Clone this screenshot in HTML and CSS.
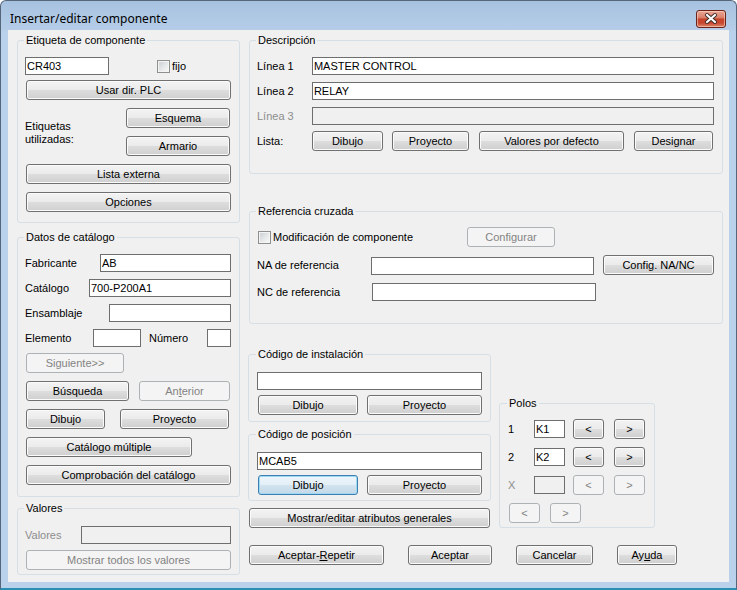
FILE: index.html
```html
<!DOCTYPE html>
<html>
<head>
<meta charset="utf-8">
<title>Insertar/editar componente</title>
<link rel="stylesheet" href="styles.css">
</head>
<body>
<div class="window">
  <div class="titlebar">
    <span class="title">Insertar/editar componente</span>
    <div class="close">
      <svg width="30" height="18" viewBox="0 0 30 18">
        <path d="M11 5 L19 12 M19 5 L11 12" stroke="#3a2a2a" stroke-width="4" stroke-linecap="round"/>
        <path d="M11 5 L19 12 M19 5 L11 12" stroke="#ffffff" stroke-width="2.2" stroke-linecap="round"/>
      </svg>
    </div>
  </div>
  <div class="client">
    <div class="col-left">
      <fieldset class="group g-tag">
        <legend>Etiqueta de componente</legend>
        <div class="row">
          <div class="tb w84">CR403</div>
          <div class="chk chk-fijo"><span class="cb"></span><span>fijo</span></div>
        </div>
        <button class="btn b-wide mt5">Usar dir. PLC</button>
        <div class="row used">
          <div class="used-label">Etiquetas<br>utilizadas:</div>
          <div class="used-btns">
            <button class="btn w104">Esquema</button>
            <button class="btn w104 mt8">Armario</button>
          </div>
        </div>
        <button class="btn b-wide mt8">Lista externa</button>
        <button class="btn b-wide mt8">Opciones</button>
      </fieldset>

      <fieldset class="group g-cat">
        <legend>Datos de catálogo</legend>
        <div class="row"><span>Fabricante</span><div class="tb w131 ml-auto">AB</div></div>
        <div class="row mt7"><span>Catálogo</span><div class="tb w142 ml-auto">700-P200A1</div></div>
        <div class="row mt7"><span>Ensamblaje</span><div class="tb w122 ml-auto"></div></div>
        <div class="row mt7"><span class="lbl-el">Elemento</span><div class="tb w48"></div><span class="ml8">Número</span><div class="tb w24 ml-auto"></div></div>
        <button class="btn dis w98 ml1 mt6">Siguiente&gt;&gt;</button>
        <div class="row mt8"><button class="btn w103 ml1">Búsqueda</button><button class="btn dis w91 ml-auto mr1">An<u>t</u>erior</button></div>
        <div class="row mt8"><button class="btn w79 ml1">Dibujo</button><button class="btn w109 ml-auto mr2">Proyecto</button></div>
        <button class="btn w166 ml1 mt8">Catálogo múltiple</button>
        <button class="btn b-wide mt8">Comprobación del catálogo</button>
      </fieldset>

      <fieldset class="group g-val">
        <legend>Valores</legend>
        <div class="row"><span class="gray">Valores</span><div class="tb dis w150 ml-auto"></div></div>
        <button class="btn dis b-wide mt6">Mostrar todos los valores</button>
      </fieldset>
    </div>

    <div class="col-right">
      <fieldset class="group g-desc">
        <legend>Descripción</legend>
        <div class="row"><span class="lbl55">Línea 1</span><div class="tb w403">MASTER CONTROL</div></div>
        <div class="row mt7"><span class="lbl55">Línea 2</span><div class="tb w403">RELAY</div></div>
        <div class="row mt7"><span class="lbl55 gray">Línea 3</span><div class="tb dis w403"></div></div>
        <div class="row mt6">
          <span class="lbl55">Lista:</span>
          <button class="btn w71">Dibujo</button>
          <button class="btn w77 ml9">Proyecto</button>
          <button class="btn w145 ml10">Valores por defecto</button>
          <button class="btn w79 ml10">Designar</button>
        </div>
      </fieldset>

      <fieldset class="group g-ref">
        <legend>Referencia cruzada</legend>
        <div class="row">
          <div class="chk chk-mod"><span class="cb"></span><span>Modificación de componente</span></div>
          <button class="btn dis w88">Configurar</button>
        </div>
        <div class="row mt8 top">
          <span class="lbl114 lbl-off">NA de referencia</span>
          <div class="tb w223 tb-off"></div>
          <button class="btn w111 ml-auto">Config. NA/NC</button>
        </div>
        <div class="row mt8">
          <span class="lbl115">NC de referencia</span>
          <div class="tb w224"></div>
        </div>
      </fieldset>

      <div class="lower">
        <div class="subcol">
          <fieldset class="group g-inst">
            <legend>Código de instalación</legend>
            <div class="tb w225"></div>
            <div class="row mt5"><button class="btn w100 ml1">Dibujo</button><button class="btn w115 ml-auto">Proyecto</button></div>
          </fieldset>
          <fieldset class="group g-pos">
            <legend>Código de posición</legend>
            <div class="tb w225">MCAB5</div>
            <div class="row mt5"><button class="btn focus w100 ml1">Dibujo</button><button class="btn w115 ml-auto">Proyecto</button></div>
          </fieldset>
          <button class="btn w241 ml1 mt7">Mostrar/editar atributos generales</button>
        </div>

        <fieldset class="group g-polos">
          <legend>Polos</legend>
          <div class="row">
            <span class="lbl26">1</span><div class="tb w31">K1</div>
            <button class="btn w31 ml8">&lt;</button><button class="btn w31 ml10">&gt;</button>
          </div>
          <div class="row mt8">
            <span class="lbl26">2</span><div class="tb w31">K2</div>
            <button class="btn w31 ml8">&lt;</button><button class="btn w31 ml10">&gt;</button>
          </div>
          <div class="row mt8">
            <span class="lbl26 gray">X</span><div class="tb dis w31"></div>
            <button class="btn dis w31 ml8">&lt;</button><button class="btn dis w31 ml10">&gt;</button>
          </div>
          <div class="row mt8">
            <button class="btn dis w31 ml1">&lt;</button><button class="btn dis w31 ml10">&gt;</button>
          </div>
        </fieldset>
      </div>

      <div class="row actions">
        <button class="btn w135">Aceptar-<u>R</u>epetir</button>
        <button class="btn w84 ml24">Aceptar</button>
        <button class="btn w77 ml24">Cancelar</button>
        <button class="btn w60 ml24">Ay<u>u</u>da</button>
      </div>
    </div>
  </div>
</div>
</body>
</html>
```

FILE: styles.css
```css
* { box-sizing: border-box; }
html, body { margin: 0; padding: 0; }
body {
  width: 737px; height: 590px; overflow: hidden;
  background: #ffffff;
  font-family: "Liberation Sans", Arial, sans-serif;
  font-size: 11px; font-weight: 400; color: #000;
}
.window {
  width: 737px; height: 590px;
  display: flex; flex-direction: column;
  padding: 0 7px 6px 7px;
  border: 1px solid #56667a;
  border-bottom: 2px solid #2b8fb3;
  border-radius: 6px 6px 0 0;
  background: linear-gradient(#a7c2e0 0px, #b5cde8 29px, #b9d1ea 30px, #b9d1ea 100%);
}
.titlebar { height: 29px; flex-shrink: 0; display: flex; align-items: flex-start; }
.title {
  font-family: "Noto Sans", "Open Sans", sans-serif;
  font-size: 12px; line-height: 16px;
  margin: 10px 0 0 2px; color: #000;
}
.close {
  margin: 9px 3px 0 auto; width: 30px; height: 18px;
  border: 1px solid #6b2219; border-radius: 3px;
  background: linear-gradient(#eaa794 0%, #d9806b 42%, #c5442c 50%, #c8472e 75%, #dc8a6c 100%);
  box-shadow: inset 0 0 0 1px rgba(255, 220, 210, 0.55);
  display: flex; align-items: center; justify-content: center;
}
.close svg { display: block; margin: -1px; }
.client {
  flex: 1; background: #f0f0f0;
  display: flex; gap: 9px;
  padding: 4px 0 0 9px;
}
.col-left { width: 223px; display: flex; flex-direction: column; }
.col-right { width: 474px; display: flex; flex-direction: column; }

.group {
  margin: 0; padding: 10px 8px 0 7px;
  border: 1px solid #d5dfe5; border-radius: 3px;
  min-width: 0;
}
.group legend { padding: 0 2px; margin-left: -1px; line-height: 13px; }
.g-tag { height: 189px; }
.g-cat { height: 266px; margin-top: 8px; }
.g-val { height: 73px; margin-top: 5px; padding-top: 11px; }
.g-desc { height: 140px; }
.g-ref { height: 119px; margin-top: 31px; padding-top: 9px; }
.lower { display: flex; gap: 8px; margin-top: 24px; margin-left: -1px; }
.subcol { width: 243px; display: flex; flex-direction: column; }
.g-inst { height: 74px; padding: 11px 8px 0 8px; }
.g-pos { height: 73px; margin-top: 6px; padding: 11px 8px 0 8px; }
.g-polos { width: 156px; height: 131px; margin-top: 49px; padding: 9px 8px 0 8px; }
.actions { margin-top: 17px; }

.row { display: flex; align-items: center; }
.row.top { align-items: flex-start; }
.tb {
  height: 18px; border: 1px solid #6e6e6e; background: #fff;
  padding: 0 1px; line-height: 16px; white-space: nowrap; overflow: hidden;
}
.tb.dis { background: #f0f0f0; }
.tb-off { margin-top: 2px; }
.lbl-off { margin-top: 4px; }
.gray { color: #8d8d8d; }

.btn {
  display: flex; align-items: center; justify-content: center;
  height: 20px; margin: 0; padding: 0;
  border: 1px solid #707070; border-radius: 3px;
  background: linear-gradient(#f3f3f3 0%, #ebebeb 48%, #dddddd 52%, #cfcfcf 100%);
  box-shadow: inset 0 0 0 1px #fbfbfb;
  font-family: "Liberation Sans", Arial, sans-serif;
  font-size: 11px; font-weight: 400;
  color: #000; white-space: nowrap; flex-shrink: 0;
}
.btn.dis { border-color: #adb2b5; background: #f4f4f4; color: #838383; box-shadow: none; }
.btn.focus {
  border-color: #3c7fb1;
  background: linear-gradient(#eef6fb 0%, #e3eef6 48%, #d2e3ef 52%, #c4d8e8 100%);
  box-shadow: inset 0 0 0 1px #9fd8f3;
}
.btn u { text-decoration: underline; text-underline-offset: 1px; }

.chk { display: flex; align-items: center; gap: 2px; }
.cb {
  width: 13px; height: 13px; flex-shrink: 0;
  border: 1px solid #8e8f8f;
  background: linear-gradient(135deg, #c9cdd2 0%, #e4e6e8 50%, #fafafa 100%);
  box-shadow: inset 0 0 0 1px #f4f4f4;
}
.chk-fijo { margin-left: 48px; }
.chk-mod { width: 209px; margin-left: 1px; }

.b-wide { width: 205px; margin-left: 1px; }
.used { margin-top: 8px; align-items: flex-start; }
.used-label { margin-top: 12px; line-height: 13px; }
.used-btns { margin-left: auto; margin-right: 1px; display: flex; flex-direction: column; }

.lbl-el { width: 68px; }
.lbl55 { width: 55px; }
.lbl114 { width: 114px; }
.lbl115 { width: 115px; }
.lbl26 { width: 26px; }

.w24 { width: 24px; } .w31 { width: 31px; } .w48 { width: 48px; } .w60 { width: 60px; }
.w71 { width: 71px; } .w77 { width: 77px; } .w79 { width: 79px; } .w84 { width: 84px; }
.w88 { width: 88px; } .w91 { width: 91px; } .w98 { width: 98px; } .w100 { width: 100px; }
.w103 { width: 103px; } .w104 { width: 104px; } .w109 { width: 109px; } .w111 { width: 111px; }
.w115 { width: 115px; } .w122 { width: 122px; } .w131 { width: 131px; } .w135 { width: 135px; }
.w142 { width: 142px; } .w145 { width: 145px; } .w150 { width: 150px; } .w166 { width: 166px; }
.w223 { width: 223px; } .w224 { width: 224px; } .w225 { width: 225px; } .w241 { width: 241px; }
.w403 { width: 403px; }

.ml1 { margin-left: 1px; } .ml8 { margin-left: 8px; } .ml9 { margin-left: 9px; }
.ml10 { margin-left: 10px; } .ml24 { margin-left: 24px; } .ml-auto { margin-left: auto; }
.mr1 { margin-right: 1px; } .mr2 { margin-right: 2px; }
.mt5 { margin-top: 5px; } .mt6 { margin-top: 6px; } .mt7 { margin-top: 7px; } .mt8 { margin-top: 8px; }
```
